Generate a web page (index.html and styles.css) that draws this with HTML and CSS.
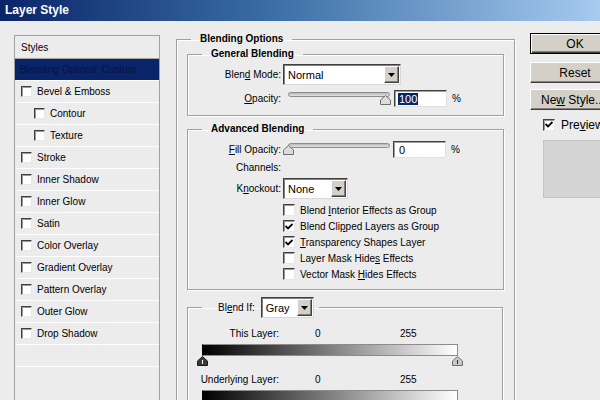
FILE: index.html
```html
<!DOCTYPE html>
<html>
<head>
<meta charset="utf-8">
<title>Layer Style</title>
<link rel="stylesheet" href="styles.css">
</head>
<body>
<div class="titlebar">Layer Style</div>
<div class="dialog">
  <ul class="styles">
    <li class="head">Styles</li>
    <li class="active">Blending Options: Custom</li>
    <li><span class="cb"></span><span>Bevel &amp; Emboss</span></li>
    <li class="sub"><span class="cb"></span><span>Contour</span></li>
    <li class="sub"><span class="cb"></span><span>Texture</span></li>
    <li><span class="cb"></span><span>Stroke</span></li>
    <li><span class="cb"></span><span>Inner Shadow</span></li>
    <li><span class="cb"></span><span>Inner Glow</span></li>
    <li><span class="cb"></span><span>Satin</span></li>
    <li><span class="cb"></span><span>Color Overlay</span></li>
    <li><span class="cb"></span><span>Gradient Overlay</span></li>
    <li><span class="cb"></span><span>Pattern Overlay</span></li>
    <li><span class="cb"></span><span>Outer Glow</span></li>
    <li><span class="cb"></span><span>Drop Shadow</span></li>
    <li></li>
  </ul>

  <fieldset class="group outer">
    <legend>Blending Options</legend>

    <fieldset class="group general">
      <legend>General Blending</legend>
      <div class="row">
        <span class="lbl">Blen<u>d</u> Mode:</span>
        <div class="select mode"><span class="val">Normal</span><span class="drop"><svg width="7" height="4" viewBox="0 0 7 4"><path d="M0 0H7L3.5 4Z" fill="#000"/></svg></span></div>
      </div>
      <div class="row r-opacity">
        <span class="lbl"><u>O</u>pacity:</span>
        <div class="slider"><div class="track"></div><svg class="thumb t-op" width="11" height="10" viewBox="0 0 11 10"><path d="M0.5 9.5V5L5.5 0.5L10.5 5V9.5Z" fill="#dcdcdc" stroke="#6e6e6e"/></svg></div>
        <div class="input"><span class="selected">100</span></div>
        <span class="pct">%</span>
      </div>
    </fieldset>

    <fieldset class="group advanced">
      <legend>Advanced Blending</legend>
      <div class="row r-fill">
        <span class="lbl"><u>F</u>ill Opacity:</span>
        <div class="slider"><div class="track"></div><svg class="thumb t-fill" width="11" height="10" viewBox="0 0 11 10"><path d="M0.5 9.5V5L5.5 0.5L10.5 5V9.5Z" fill="#dcdcdc" stroke="#6e6e6e"/></svg></div>
        <div class="input"><span class="plain">0</span></div>
        <span class="pct">%</span>
      </div>
      <div class="row r-chan">
        <span class="lbl">Channels:</span>
      </div>
      <div class="row r-knock">
        <span class="lbl">K<u>n</u>ockout:</span>
        <div class="select knock"><span class="val">None</span><span class="drop"><svg width="7" height="4" viewBox="0 0 7 4"><path d="M0 0H7L3.5 4Z" fill="#000"/></svg></span></div>
      </div>
      <ul class="checks">
        <li><span class="cb"></span><span>Blend <u>I</u>nterior Effects as Group</span></li>
        <li><span class="cb on"><svg width="8" height="7" viewBox="0 0 8 7"><path d="M0.5 3L3 5.5L7.5 1" fill="none" stroke="#000" stroke-width="1.8"/></svg></span><span>Blend Cli<u>p</u>ped Layers as Group</span></li>
        <li><span class="cb on"><svg width="8" height="7" viewBox="0 0 8 7"><path d="M0.5 3L3 5.5L7.5 1" fill="none" stroke="#000" stroke-width="1.8"/></svg></span><span><u>T</u>ransparency Shapes Layer</span></li>
        <li><span class="cb"></span><span>Layer Mask Hide<u>s</u> Effects</span></li>
        <li><span class="cb"></span><span>Vector Mask <u>H</u>ides Effects</span></li>
      </ul>
    </fieldset>

    <fieldset class="group blendif">
      <legend><span class="bi-lbl">Bl<u>e</u>nd If:</span><span class="select gray"><span class="val">Gray</span><span class="drop"><svg width="7" height="4" viewBox="0 0 7 4"><path d="M0 0H7L3.5 4Z" fill="#000"/></svg></span></span></legend>
      <div class="lrow">
        <span class="lbl2">This Layer:</span><span class="v0">0</span><span class="v255">255</span>
      </div>
      <div class="gradbar"></div>
      <div class="thumbs">
        <svg width="11" height="10" viewBox="0 0 11 10"><path d="M0.5 9.5V5L5.5 0.5L10.5 5V9.5Z" fill="#3a3a3a" stroke="#1a1a1a"/><path d="M5.5 4V8" stroke="#fff" stroke-width="1"/></svg>
        <svg width="11" height="10" viewBox="0 0 11 10"><path d="M0.5 9.5V5L5.5 0.5L10.5 5V9.5Z" fill="#c8c8c8" stroke="#6e6e6e"/><path d="M5.5 4V8" stroke="#2a2a2a" stroke-width="1"/></svg>
      </div>
      <div class="lrow">
        <span class="lbl2">Underlying Layer:</span><span class="v0">0</span><span class="v255">255</span>
      </div>
      <div class="gradbar"></div>
    </fieldset>
  </fieldset>

  <div class="side">
    <div class="btn default">OK</div>
    <div class="btn reset">Reset</div>
    <div class="btn newstyle"><span>Ne<u>w</u> Style...</span></div>
    <label class="preview"><span class="cb on"><svg width="8" height="7" viewBox="0 0 8 7"><path d="M0.5 3L3 5.5L7.5 1" fill="none" stroke="#000" stroke-width="1.8"/></svg></span><span>Pre<u>v</u>iew</span></label>
    <div class="swatch"></div>
  </div>
</div>
</body>
</html>
```

FILE: styles.css
```css
* { box-sizing: border-box; }
html, body { margin: 0; padding: 0; }
body {
  width: 600px;
  height: 400px;
  overflow: hidden;
  background: #ececec;
  font-family: "Liberation Sans", Arial, sans-serif;
  font-size: 10px;
  color: #000;
}
u { text-decoration: underline; text-underline-offset: 1px; }

.titlebar {
  height: 21px;
  line-height: 21px;
  padding-left: 5px;
  background: linear-gradient(to right, #0a246a 0%, #3a6ea5 45%, #a6caf0 100%);
  color: #fff;
  font-weight: bold;
  font-size: 12px;
}

.dialog {
  display: flex;
  align-items: flex-start;
  padding: 12px 0 0 14px;
  height: 379px;
}

/* left list */
.styles {
  list-style: none;
  margin: 2px 16px 0 0;
  padding: 0;
  width: 146px;
  height: 400px;
  flex: none;
  border: 1px solid #a0a0a0;
  border-bottom: none;
}
.styles li {
  display: flex;
  align-items: center;
  height: 22px;
  border-bottom: 1px solid #fff;
  padding-left: 6px;
  white-space: nowrap;
}
.styles li.head { height: 23px; border-bottom-color: #a8a8a8; }
.styles li.active {
  background: #0a246a;
  color: #08133d;
  padding-left: 5px;
}
.styles li.sub { padding-left: 19px; }
.styles .cb { width: 11px; height: 11px; margin-right: 5px; }

.cb {
  flex: none;
  display: inline-flex;
  align-items: center;
  justify-content: center;
  width: 12px;
  height: 12px;
  background: #fff;
  border: 1px solid;
  border-color: #404040 #e8e8e8 #e8e8e8 #404040;
  box-shadow: inset 1px 1px #9a9a9a;
}

/* group boxes */
fieldset.group {
  margin: 0;
  min-width: 0;
  border: 1px solid #a0a0a0;
  box-shadow: 1px 1px 0 #fff, inset 1px 1px 0 #fff;
}
fieldset.group > legend {
  font-weight: bold;
  line-height: 12px;
  padding: 0 9px;
  margin-left: 14px;
}
fieldset.outer {
  flex: none;
  width: 339px;
  padding: 3px 10px 40px;
}
fieldset.outer > legend { margin-left: 4px; }
fieldset.general { padding: 4px 0 8px; }
fieldset.advanced { padding: 6px 0 7px; margin-top: 7px; }
fieldset.blendif { padding: 9px 0 30px; margin-top: 7px; margin-right: 1px; }

.row { display: flex; align-items: center; }
.lbl { width: 93px; text-align: right; margin-right: 2px; flex: none; }
.r-opacity { margin-top: 5px; height: 17px; }
.r-fill { height: 17px; }
.r-chan { height: 12px; margin-top: 3px; }
.r-knock { margin-top: 5px; }

.select {
  display: flex;
  align-items: stretch;
  height: 21px;
  background: #fff;
  border: 1px solid;
  border-color: #404040 #d8d8d8 #d8d8d8 #404040;
  box-shadow: inset 1px 1px #808080;
  padding: 1px 1px 1px 2px;
}
.select .val { flex: 1; padding: 1px 0 0 2px; display: flex; align-items: center; font-size: 11px; font-weight: normal; }
.select .drop {
  width: 15px;
  flex: none;
  display: flex;
  align-items: center;
  justify-content: center;
  background: #d4d0c8;
  border: 1px solid;
  border-color: #fff #404040 #404040 #fff;
  box-shadow: inset -1px -1px #808080;
}
.select.mode { width: 118px; }
.select.knock { width: 65px; }
.select.gray { width: 53px; }

.slider { position: relative; width: 102px; height: 17px; margin-left: 5px; flex: none; }
.track {
  margin-top: 2px;
  height: 5px;
  border-radius: 3px;
  border: 1px solid #8c8c8c;
  background: linear-gradient(#b8b8b8, #e4e4e4);
}
.thumb { position: absolute; }
.t-op { left: 92px; top: 5px; }
.t-fill { left: -5px; top: 4px; }

.input {
  width: 53px;
  height: 17px;
  margin-left: 4px;
  flex: none;
  background: #fff;
  border: 1px solid;
  border-color: #404040 #e0e0e0 #e0e0e0 #404040;
  box-shadow: inset 1px 1px #a0a0a0;
  padding: 2px 0 0 3px;
  font-size: 11px;
  line-height: 12px;
}
.r-fill .input { margin-left: 3px; }
.input .selected { background: #0a246a; color: #fff; padding: 0 1px; }
.input .plain { padding-left: 2px; }
.pct { margin-left: 5px; }

.checks { list-style: none; margin: 3px 0 0; padding: 0 0 0 95px; }
.checks li { display: flex; align-items: center; height: 16px; white-space: nowrap; }
.checks .cb { margin-right: 5px; }

/* blend if */
fieldset.blendif > legend {
  display: flex;
  align-items: center;
  font-weight: normal;
  line-height: normal;
  padding: 0 5px 0 16px;
}
.bi-lbl { margin-right: 6px; }
.lrow { display: flex; height: 12px; align-items: center; }
.lbl2 { width: 91px; text-align: right; flex: none; }
.v0 { margin-left: 36px; width: 85px; flex: none; }
.gradbar {
  margin: 5px 0 0 14px;
  width: 256px;
  height: 12px;
  border: 1px solid #8c8c8c;
  border-left-color: #000;
  background: linear-gradient(to right, #000, #fff);
}
.thumbs {
  display: flex;
  justify-content: space-between;
  width: 266px;
  margin: 0 0 8px 9px;
  height: 9px;
}

/* side buttons */
.side {
  display: flex;
  flex-direction: column;
  margin-left: 15px;
  width: 70px;
  flex: none;
  font-size: 12px;
}
.btn {
  width: 90px;
  height: 21px;
  flex: none;
  display: flex;
  align-items: center;
  justify-content: center;
  background: #d4d0c8;
  border: 1px solid;
  border-color: #fff #404040 #404040 #fff;
  box-shadow: inset -1px -1px #808080;
  white-space: nowrap;
}
.btn.default {
  border: 1px solid #000;
  box-shadow: inset 1px 1px #fff, inset -1px -1px #404040, inset -2px -2px #808080;
}
.btn.reset { margin-top: 8px; }
.btn.newstyle { margin-top: 6px; justify-content: flex-start; padding-left: 10px; }
.preview {
  display: flex;
  align-items: center;
  margin: 8px 0 0 13px;
  height: 13px;
  white-space: nowrap;
}
.preview .cb { margin-right: 6px; }
.swatch {
  margin: 9px 0 0 13px;
  width: 70px;
  height: 58px;
  background: #d4d4d4;
  border: 1px solid #c4c4c4;
}
```
